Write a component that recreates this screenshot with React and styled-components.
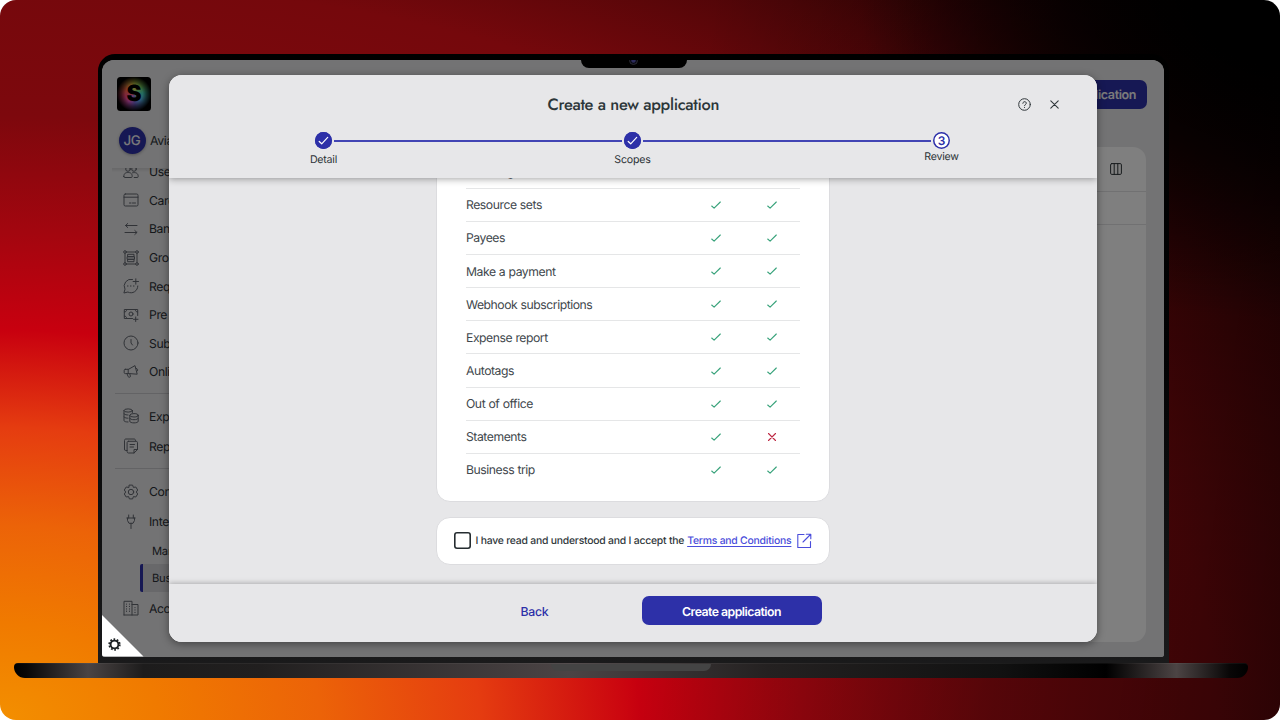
import React from "react";
import styled, { createGlobalStyle, css } from "styled-components";

const Global = createGlobalStyle`
  *, *::before, *::after { box-sizing: border-box; }
  body { margin: 0; background: #fff; font-family: Inter, "Liberation Sans", sans-serif; color: #30373b; text-rendering: geometricPrecision; }
  button { font: inherit; border: 0; padding: 0; background: none; text-rendering: inherit; letter-spacing: inherit; }
  svg { display: block; flex: none; }
`;

const Stage = styled.main`
  width: 1280px;
  height: 720px;
  overflow: hidden;
  border-radius: 16px;
  padding: 54px 0 0 14px;
  background:
    radial-gradient(ellipse 420px 320px at 100% 0, #000 20%, rgba(0, 0, 0, 0.7) 50%, transparent 100%),
    linear-gradient(97deg, transparent 52%, rgba(0, 0, 0, 0.58) 100%),
    radial-gradient(ellipse 640px 390px at 0 100%,
      #f38f00 0%, #f07a00 25%, #ec6308 50%, #e53c10 75%, #c8000f 100%,
      #a3060f 125%, #7d080d 155%, #75080c 190%, #4c0507 222%, #0a0000 265%, #000 280%);
`;

const Lid = styled.div`
  width: 1071px;
  height: 608.5px;
  margin-left: 83.5px;
  padding: 6px 5px 6px 4.5px;
  border-radius: 17px 17px 0 0;
  background: linear-gradient(#000 0%, #020203 50%, #1a1a1b 100%);
`;

const Screen = styled.div`
  position: relative;
  display: flex;
  height: 596.5px;
  overflow: hidden;
  border-radius: 12px 12px 3px 3px;
  background: #e6e6e8;
`;

const Sidebar = styled.aside`
  width: 150px;
  display: flex;
  flex-direction: column;
`;

const BrandArea = styled.div`
  height: 108px;
  padding: 17px 0 0 15px;
  box-shadow: 0 2px 3px rgba(0, 0, 0, 0.1);
  clip-path: inset(0 0 -4px 10px);
`;

const Logo = styled.div`
  width: 34px;
  height: 34px;
  border-radius: 3.5px;
  overflow: hidden;
  display: grid;
  place-items: center;
  padding-top: 1px;
  font-weight: 900;
  font-size: 22.5px;
  line-height: 1;
  color: #000;
  background:
    radial-gradient(circle at 50% 50%, rgba(255, 255, 255, 0.25) 0, transparent 36%, rgba(0, 0, 0, 0.5) 52%, #000 72%),
    conic-gradient(#d6e04a 0deg, #7fe06a 45deg, #45d9c0 85deg, #59b8f0 130deg, #7667d8 175deg, #e858c8 215deg, #ff487a 260deg, #ff6a44 300deg, #ffb84a 335deg, #d6e04a 360deg);
`;

const Account = styled.div`
  display: flex;
  align-items: center;
  gap: 4.5px;
  margin: 16px 0 0 1.5px;
  font-size: 12.3px;
  letter-spacing: -0.35px;
`;

const Avatar = styled.div`
  width: 27px;
  height: 27px;
  border-radius: 50%;
  display: grid;
  place-items: center;
  background: #2d30a8;
  color: #f2f2f6;
  font-size: 13.3px;
  font-weight: 500;
  box-shadow: 0 1px 3px rgba(0, 0, 0, 0.3);
`;

const Nav = styled.nav`
  flex: 1;
  overflow: hidden;
  padding-left: 12.5px;
`;

const NavItem = styled.a`
  display: flex;
  align-items: center;
  gap: 10.5px;
  height: ${(p) => p.$h || 28.6}px;
  margin-top: ${(p) => p.$top || 0}px;
  padding-left: 8px;
  font-size: 12.2px;
  letter-spacing: -0.4px;
  white-space: nowrap;
  color: #2b3036;
  svg { color: #62666f; }
`;

const SubItem = styled.a`
  display: flex;
  align-items: center;
  height: 27.5px;
  margin-left: 25px;
  padding-left: 9.5px;
  border-left: 3px solid transparent;
  border-radius: 2px;
  font-size: 11.2px;
  letter-spacing: -0.25px;
  color: #2b3036;
  ${(p) => p.$active && css`
    border-left-color: #2d30a8;
    background: #d0d0d5;
  `}
`;

const Divider = styled.hr`
  height: 1px;
  margin: ${(p) => p.$m};
  border: 0;
  background: #c6c6ca;
`;

const Workspace = styled.section`
  flex: 1;
  display: flex;
  flex-direction: column;
  align-items: flex-end;
  padding: 20px 17px 14.5px 20px;
`;

const NewButton = styled.button`
  height: 29px;
  padding: 1px 10.5px 0;
  border-radius: 7px;
  background: #2d30a8;
  color: #f5f5f5;
  font-size: 12.5px;
  font-weight: 600;
  letter-spacing: -0.4px;
`;

const Panel = styled.div`
  align-self: stretch;
  flex: 1;
  margin: 38px 0.5px 0 0;
  border-radius: 13px;
  background: #fefefe;
`;

const PanelBar = styled.div`
  display: flex;
  justify-content: flex-end;
  align-items: center;
  height: ${(p) => p.$h}px;
  padding-right: 24px;
  border-bottom: 1px solid #e2e2e5;
  color: #30373b;
`;

const Dim = styled.div`
  position: absolute;
  inset: 0;
  background: rgba(0, 0, 0, 0.5);
`;

const Notch = styled.div`
  position: absolute;
  top: -1px;
  left: 478.5px;
  width: 106px;
  height: 9px;
  border-radius: 0 0 8px 8px;
  background: #000;
  display: grid;
  justify-content: center;
`;

const Camera = styled.div`
  width: 9px;
  height: 9px;
  margin: -3px 1px 0 0;
  border-radius: 50%;
  border: 1px solid #2b2b34;
  background: radial-gradient(circle, #2c2b5c 0 1.6px, #090914 2.8px);
`;

const SettingsCorner = styled.div`
  position: absolute;
  left: 0;
  bottom: 0;
  width: 41.5px;
  height: 41.5px;
  padding: 22.5px 0 0 6px;
  background: #fff;
  clip-path: polygon(0 0, 100% 100%, 0 100%);
  color: #1d2225;
`;

const Dialog = styled.div`
  position: absolute;
  top: 15px;
  left: 67px;
  width: 928px;
  height: 566.5px;
  display: flex;
  flex-direction: column;
  overflow: hidden;
  border-radius: 13px;
  background: #e7e7e9;
`;

const DialogShade = styled(Dialog)`
  overflow: visible;
  box-shadow: 0 2px 9px rgba(0, 0, 0, 0.42);
`;

const DialogHead = styled.header`
  height: 103px;
  z-index: 1;
  background: #e7e7e9;
  box-shadow: 0 1px 7px rgba(0, 0, 0, 0.36);
`;

const TitleRow = styled.div`
  display: grid;
  grid-template-columns: 1fr auto 1fr;
  align-items: center;
  height: 57px;
  padding: 2px 36.5px 0 37px;
`;

const Title = styled.h1`
  grid-column: 2;
  margin: 0;
  padding-top: 1px;
  font: 500 16.4px/1 Jost, Lato, sans-serif;
  letter-spacing: -0.3px;
  color: #2c3639;
`;

const HeadActions = styled.div`
  display: flex;
  align-items: center;
  justify-content: flex-end;
  gap: 17px;
  color: #30373b;
`;

const Stepper = styled.ol`
  display: grid;
  grid-template-columns: repeat(3, 309px);
  margin: 0;
  padding: 0;
  list-style: none;
`;

const Step = styled.li`
  display: flex;
  flex-direction: column;
  gap: ${(p) => (p.$current ? 2 : 4.5)}px;
  font-size: 10.6px;
  letter-spacing: -0.2px;
  line-height: 12px;
  text-align: center;
  color: #2c3337;
`;

const Track = styled.div`
  display: flex;
  align-items: center;
  gap: 2px;
  height: 17px;
`;

const Rail = styled.span`
  flex: 1;
  height: 2px;
  margin-top: 1px;
  background: ${(p) => (p.$on ? "#4245b4" : "transparent")};
`;

const Dot = styled.span`
  width: 17px;
  height: 17px;
  border-radius: 50%;
  display: grid;
  place-items: center;
  box-shadow: inset 0 0 0 1.5px #2d30a8;
  background: ${(p) => (p.$current ? "#fff" : "#2d30a8")};
  color: ${(p) => (p.$current ? "#2d30a8" : "#fff")};
  font-size: 12px;
  font-weight: 600;
`;

const DialogBody = styled.div`
  flex: 1;
  min-height: 0;
  overflow: hidden;
  display: flex;
  flex-direction: column;
  justify-content: flex-end;
  align-items: center;
  gap: 15.5px;
  padding-bottom: 19.5px;
`;

const Card = styled.section`
  flex: none;
  width: 394px;
  border: 1px solid #dcdcdf;
  border-radius: 14px;
  background: #fff;
`;

const ScopeCard = styled(Card)`
  padding: 0 29px 14.5px;
`;

const ScopeRow = styled.div`
  display: grid;
  grid-template-columns: 1fr 56px 56px;
  align-items: center;
  height: 33.15px;
  font-size: 12.2px;
  letter-spacing: -0.45px;
  word-spacing: 0.3px;
  color: #41474c;
  & + & { border-top: 1px solid #e5e6e7; }
`;

const Mark = styled.span`
  display: grid;
  justify-content: center;
  color: ${(p) => (p.$no ? "#bd2843" : "#37a27a")};
`;

const TermsCard = styled(Card)`
  height: 47.5px;
  display: flex;
  align-items: center;
  padding: 0 17px;
  font-size: 10.4px;
  font-weight: 500;
  letter-spacing: -0.22px;
  white-space: nowrap;
`;

const Checkbox = styled.span`
  flex: none;
  width: 17px;
  height: 17px;
  margin-right: 4.5px;
  box-shadow: inset 0 0 0 1.6px #252c30;
  border-radius: 3px;
`;

const TermsLink = styled.a`
  display: flex;
  align-items: center;
  gap: 5px;
  margin-left: 3px;
  color: #4a4ddb;
  span { text-decoration: underline; text-underline-offset: 1.5px; }
`;

const DialogFoot = styled.footer`
  height: 57.5px;
  z-index: 1;
  display: flex;
  justify-content: center;
  align-items: flex-start;
  gap: 17px;
  padding: 12px 0 0;
  background: #e7e7e9;
  box-shadow: 0 -1px 5px rgba(0, 0, 0, 0.25);
`;

const Action = styled.button`
  width: 180px;
  height: 29px;
  border-radius: 7px;
  font-size: 12.3px;
  padding-top: 1px;
  font-weight: ${(p) => (p.$primary ? 600 : 500)};
  letter-spacing: ${(p) => (p.$primary ? -0.53 : -0.3)}px;
  color: ${(p) => (p.$primary ? "#fff" : "#2d30a8")};
  background: ${(p) => (p.$primary ? "#2d30a8" : "transparent")};
`;

const Base = styled.div`
  width: 1234px;
  height: 15px;
  display: flex;
  justify-content: center;
  border-radius: 4px 4px 11px 11px;
  border-top: 1px solid rgba(255, 255, 255, 0.05);
  background: linear-gradient(90deg, #000 0, #080707 1%, #4a4444 6%, #1d1c1c 10.5%, #211f1f 20%, #4b4445 45%, #242121 61%, #111 80%, #000 88.5%, #4c4444 94.2%, #090707 98.5%, #000);
`;

const BaseLip = styled.div`
  width: 160px;
  height: 7px;
  border-radius: 0 0 8px 8px;
  background: #444;
`;

const Icon = ({ size = 16, box = 16, sw = 1, children }) => (
  <svg width={size} height={size} viewBox={`0 0 ${box} ${box}`} fill="none" stroke="currentColor"
    strokeWidth={sw} strokeLinecap="round" strokeLinejoin="round">{children}</svg>
);

const icons = {
  users: <><circle cx="5" cy="5" r="2.3" /><circle cx="11" cy="5" r="2.3" /><path d="M.8 12.5C.8 9 3 8.5 5 8.5s4.2.5 4.2 4c0 .7-.3 1-1 1H1.8c-.7 0-1-.3-1-1ZM9.5 8.8c3-.8 5.7.2 5.7 3.7 0 .7-.3 1-1 1h-3" /></>,
  card: <><rect x="1" y="2" width="14" height="12" rx="1.3" /><path d="M1 5.2h14M6.5 11H8M9.5 11h3" /></>,
  bank: <path d="M14 4.5H2.5L4.7 2.5M2.5 4.5 4.7 6.5M2 11.5h12l-2.2-2M14 11.5l-2.2 2" />,
  group: <><circle cx="2" cy="2" r="1.3" /><circle cx="14" cy="2" r="1.3" /><circle cx="2" cy="14" r="1.3" /><circle cx="14" cy="14" r="1.3" /><path d="M3.3 2h9.4M3.3 14h9.4M2 3.3v9.4M14 3.3v9.4" /><path d="M5 4.3h6v2.4H5zM4.5 6.7h7v2.6h-7zM5 9.3h6v2.4H5z" /></>,
  request: <><path d="M9.5 1.4A6.8 6.8 0 0 0 2 11.2L.9 15l4-1A6.7 6.7 0 0 0 14.8 8M12.8.8v5.4M10.1 3.5h5.4" /><path strokeWidth="1.3" d="M4.8 8h.01M7.8 8h.01M10.8 8h.01" /></>,
  pre: <><path d="M9.5 11.5H1.3v-9h13.4v6M1.3 5C3 5 3.7 4 3.7 2.5M12.3 2.5C12.3 4 13 5 14.7 5M1.3 9c1.5 0 2.4 1 2.4 2.5M12.7 10v4.5M10.5 12.3H15" /><circle cx="8" cy="7" r="2" /></>,
  clock: <><circle cx="8" cy="8" r="7" /><path d="M8 4.5V8l1.5 2" /></>,
  horn: <><path d="M2.3 5.3h3.2L12 1.6l2.2 8.6-7.7-.6H2.3c-.7 0-1.1-.4-1.1-1V6.3c0-.6.4-1 1.1-1ZM5.2 5.3v4.2M4 9.7l1.2 3c.6 1 2.6.6 2.2-.7L6.7 9.6M13.1 4.4a1.7 1.7 0 0 1 .7 3.2" /></>,
  coins: <><ellipse cx="5.2" cy="2.5" rx="4.2" ry="1.6" /><path d="M1 2.5v10C1 13.6 3 14 5 14M9.4 2.5v2M1 5.8C2 6.8 3.7 7 5 7M1 9c1 1 2.7 1.2 4 1.2" /><ellipse cx="11" cy="7.3" rx="4.2" ry="1.7" /><path d="M6.8 7.3v6c0 2.1 8.4 2.1 8.4 0v-6M6.8 10.3c0 2 8.4 2 8.4 0" /></>,
  report: <><path d="M4 12.5H2.8A1.3 1.3 0 0 1 1.5 11V2.5c0-1 .5-1.5 1.5-1.5h8c1 0 1.5.5 1.5 1.5" /><path d="M5.5 3.3h7.7c.8 0 1.3.5 1.3 1.3v7L11 15H5.5c-.8 0-1.4-.5-1.4-1.4v-9c0-.8.5-1.3 1.4-1.3ZM11 15v-3.5h3.5M7 6.5h4.5M7 9h3.5" /></>,
  gear: <><circle cx="8" cy="8" r="2.7" /><path d="M6.4 1.1h3.2l.8 2.3 2.4-.4 1.9 3L13.3 8l1.4 2-1.9 3-2.4-.4-.8 2.3H6.4l-.8-2.3-2.4.4-1.9-3L2.7 8 1.3 6l1.9-3 2.4.4Z" /></>,
  plug: <path d="M5.7 1v3M10.3 1v3M3.8 4h8.4M4.5 4v2.5L6 9.3h4l1.5-2.8V4M8 9.3V14.5" />,
  building: <><path d="M1 15V1.3h8V15M9 4.5h6V15H1" /><path strokeWidth="1.2" strokeDasharray=".1 2.3" d="M3.5 4v9M6.5 4v9M12 7.5v6" /></>,
};

const mainNav = [
  ["users", "Users"], ["card", "Cards"], ["bank", "Bank"], ["group", "Groups"],
  ["request", "Requ"], ["pre", "Pre"], ["clock", "Subs"], ["horn", "Onlin"],
];

const scopes = [
  ["Invoicing", true, true],
  ["Resource sets", true, true],
  ["Payees", true, true],
  ["Make a payment", true, true],
  ["Webhook subscriptions", true, true],
  ["Expense report", true, true],
  ["Autotags", true, true],
  ["Out of office", true, true],
  ["Statements", true, false],
  ["Business trip", true, true],
];

const ScopeMark = ({ ok }) => (
  <Mark $no={!ok}>
    <Icon size={12} box={12} sw={1.1}>
      {ok ? <path d="m1.7 7 2.4 2.2L10.3 3" /> : <path d="m2.5 2.5 7 7M9.5 2.5l-7 7" />}
    </Icon>
  </Mark>
);

const StepItem = ({ label, current, first }) => (
  <Step $current={current}>
    <Track>
      <Rail $on={!first} />
      <Dot $current={current}>
        {current ? "3" : <Icon size={13} box={13} sw={1.2}><path d="m2.2 7.5 2.5 2.3 6-6.4" /></Icon>}
      </Dot>
      <Rail $on={!current} />
    </Track>
    {label}
  </Step>
);

export default function App() {
  return (
    <Stage>
      <Global />
      <Lid>
        <Screen>
          <Sidebar>
            <BrandArea>
              <Logo>S</Logo>
              <Account><Avatar>JG</Avatar>Aviat</Account>
            </BrandArea>
            <Nav>
              {mainNav.map(([icon, label], i) => (
                <NavItem key={icon} $top={i === 0 ? -10.5 : 0}><Icon>{icons[icon]}</Icon>{label}</NavItem>
              ))}
              <Divider $m="7px 0 7px" />
              <NavItem $h={30}><Icon>{icons.coins}</Icon>Expe</NavItem>
              <NavItem $h={30}><Icon>{icons.report}</Icon>Repo</NavItem>
              <Divider $m="7px 0 7.5px" />
              <NavItem $h={30}><Icon>{icons.gear}</Icon>Conf</NavItem>
              <NavItem $h={30}><Icon>{icons.plug}</Icon>Inte</NavItem>
              <SubItem>Man</SubItem>
              <SubItem $active>Busi</SubItem>
              <NavItem $h={30} $top={1.5}><Icon>{icons.building}</Icon>Acco</NavItem>
            </Nav>
          </Sidebar>
          <Workspace>
            <NewButton>Create application</NewButton>
            <Panel>
              <PanelBar $h={45}>
                <Icon size={12} box={12}><rect x=".6" y=".6" width="10.8" height="10.8" rx="1.2" /><path d="M4.2.6v10.8M7.8.6v10.8" /></Icon>
              </PanelBar>
              <PanelBar $h={32.5} />
            </Panel>
          </Workspace>
          <Dim />
          <Notch><Camera /></Notch>
          <SettingsCorner>
            <Icon size={13} box={13} sw={1.9}>
              <circle cx="6.5" cy="6.5" r="3.9" />
              <circle cx="6.5" cy="6.5" r="5.2" strokeLinecap="butt" strokeDasharray="1.7 1.567" />
            </Icon>
          </SettingsCorner>
          <DialogShade />
          <Dialog role="dialog">
            <DialogHead>
              <TitleRow>
                <Title>Create a new application</Title>
                <HeadActions>
                  <Icon size={13} box={13}><circle cx="6.5" cy="6.5" r="5.8" /><path d="M4.8 5.3c0-2.2 3.5-2.2 3.5-.1 0 1.3-1.8 1.3-1.8 2.5M6.5 9.4v.1" /></Icon>
                  <Icon size={13} box={13} sw={1.1}><path d="m2.8 2.8 7.4 7.4M10.2 2.8l-7.4 7.4" /></Icon>
                </HeadActions>
              </TitleRow>
              <Stepper>
                <StepItem label="Detail" first />
                <StepItem label="Scopes" />
                <StepItem label="Review" current />
              </Stepper>
            </DialogHead>
            <DialogBody>
              <ScopeCard>
                {scopes.map(([name, read, write]) => (
                  <ScopeRow key={name}><span>{name}</span><ScopeMark ok={read} /><ScopeMark ok={write} /></ScopeRow>
                ))}
              </ScopeCard>
              <TermsCard>
                <Checkbox />
                <span>I have read and understood and I accept the</span>
                <TermsLink>
                  <span>Terms and Conditions</span>
                  <Icon sw={1.1}><path d="M8 1.5H1.8v13h12.7V8.5M10.3 1.2h4.5v4.5M14.5 1.5 7 9" /></Icon>
                </TermsLink>
              </TermsCard>
            </DialogBody>
            <DialogFoot>
              <Action>Back</Action>
              <Action $primary>Create application</Action>
            </DialogFoot>
          </Dialog>
        </Screen>
      </Lid>
      <Base><BaseLip /></Base>
    </Stage>
  );
}
